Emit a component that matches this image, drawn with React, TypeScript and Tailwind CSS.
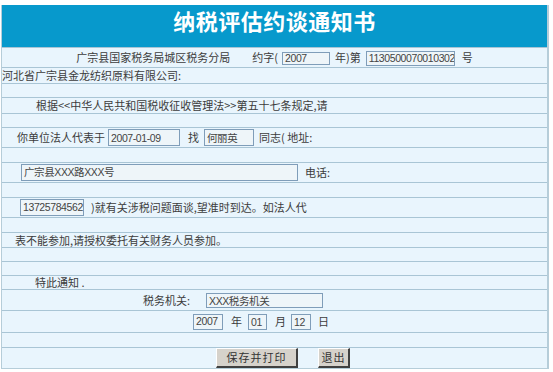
const font = { fontFamily: '"Noto Sans CJK SC", "Noto Sans", sans-serif' };
const boxFont = { fontFamily: '"Liberation Sans", "Noto Sans CJK SC", sans-serif' };

function Box({ w, h = "h-[16px]", children }: { w: string; h?: string; children?: React.ReactNode }) {
  return (
    <span
      style={boxFont}
      className={`${w} ${h} inline-flex items-center shrink-0 border border-[#7f9db9] bg-[#eef5f9] pl-[2px] text-[10.5px] tracking-[-0.4px] leading-none text-[#444] overflow-hidden whitespace-nowrap`}
    >
      {children}
    </span>
  );
}

function Row({ h, className = "", children }: { h: string; className?: string; children?: React.ReactNode }) {
  return (
    <div className={`${h} flex items-center border-t border-[#a9c5d5] whitespace-nowrap ${className}`}>
      {children}
    </div>
  );
}

function Btn({ w, children }: { w: string; children: React.ReactNode }) {
  return (
    <span
      className={`${w} h-[20px] inline-flex items-center justify-center bg-[#d6d2cb] border-t border-l border-white border-r-2 border-b-2 border-r-[#404040] border-b-[#404040] text-[11px] tracking-[1px] text-[#333]`}
    >
      {children}
    </span>
  );
}

export default function App() {
  return (
    <div className="w-[553px] h-[372px] bg-white pt-[5px] pl-[1px]" style={font}>
      <div className="w-[548px] border-l border-r-2 border-b border-[#b6cdd9] bg-[#e9f5fd] text-[11px] text-[#3c3c3c]">
        <div className="h-[42px] bg-[#0799cc] flex justify-center text-white text-[22px] leading-[30px] font-bold tracking-[0.5px]">
          纳税评估约谈通知书
        </div>

        <Row h="h-[20px]" className="justify-center">
          <span>广宗县国家税务局城区税务分局</span>
          <span className="ml-[22px]">约字(</span>
          <span className="ml-[4px]">
            <Box w="w-[48px]" h="h-[13px]">2007</Box>
          </span>
          <span className="ml-[5px]">年)第</span>
          <span className="ml-[5px]">
            <Box w="w-[89px]" h="h-[15px]">1130500070010302</Box>
          </span>
          <span className="ml-[7px]">号</span>
        </Row>

        <Row h="h-[16px]">
          <span>河北省广宗县金龙纺织原料有限公司:</span>
        </Row>
        <Row h="h-[14px]" />
        <Row h="h-[16px]" className="pl-[34px]">
          <span>根据&lt;&lt;中华人民共和国税收征收管理法&gt;&gt;第五十七条规定,请</span>
        </Row>
        <Row h="h-[14px]" />

        <Row h="h-[20px]" className="pl-[15px]">
          <span>你单位法人代表于</span>
          <span className="ml-[3px]">
            <Box w="w-[72px]" h="h-[17px]">2007-01-09</Box>
          </span>
          <span className="ml-[8px]">找</span>
          <span className="ml-[5px]">
            <Box w="w-[50px]" h="h-[17px]">何丽英</Box>
          </span>
          <span className="ml-[5px]">同志( 地址:</span>
        </Row>
        <Row h="h-[15px]" />

        <Row h="h-[20px]" className="pl-[19px]">
          <Box w="w-[277px]" h="h-[17px]">广宗县XXX路XXX号</Box>
          <span className="ml-[7px]">电话:</span>
        </Row>
        <Row h="h-[15px]" />

        <Row h="h-[20px]" className="pl-[18px]">
          <Box w="w-[64px]" h="h-[17px]">13725784562</Box>
          <span className="ml-[7px]">)就有关涉税问题面谈,望准时到达。如法人代</span>
        </Row>
        <Row h="h-[15px]" />

        <Row h="h-[15px]" className="pl-[13px]">
          <span>表不能参加,请授权委托有关财务人员参加。</span>
        </Row>
        <Row h="h-[14px]" />
        <Row h="h-[14px]" />

        <Row h="h-[14px]" className="pl-[33px]">
          <span>特此通知 .</span>
        </Row>

        <Row h="h-[21px]" className="pl-[141px]">
          <span>税务机关:</span>
          <span className="ml-[16px]">
            <Box w="w-[117px]" h="h-[15px]">XXX税务机关</Box>
          </span>
        </Row>

        <Row h="h-[22px]" className="pl-[191px]">
          <Box w="w-[30px]" h="h-[16px]">2007</Box>
          <span className="ml-[8px]">年</span>
          <span className="ml-[6px]">
            <Box w="w-[19px]" h="h-[16px]">01</Box>
          </span>
          <span className="ml-[8px]">月</span>
          <span className="ml-[5px]">
            <Box w="w-[20px]" h="h-[16px]">12</Box>
          </span>
          <span className="ml-[7px]">日</span>
        </Row>
        <Row h="h-[15px]" />

        <Row h="h-[21px]" className="pl-[214px]">
          <Btn w="w-[82px]">保存并打印</Btn>
          <span className="ml-[20px]">
            <Btn w="w-[32px]">退出</Btn>
          </span>
        </Row>
      </div>
    </div>
  );
}
